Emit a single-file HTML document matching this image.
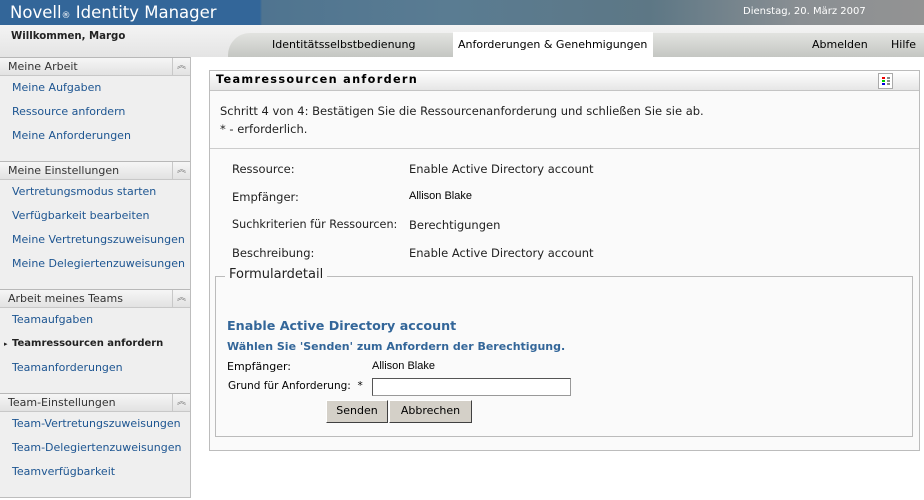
<!DOCTYPE html>
<html><head><meta charset="utf-8"><style>
*{margin:0;padding:0;box-sizing:border-box}
body{width:924px;height:500px;position:relative;overflow:hidden;background:#fff;font-family:"DejaVu Sans","Liberation Sans",sans-serif;font-size:12px;color:#000}
.a{position:absolute;white-space:nowrap}
#hdr{left:0;top:0;width:924px;height:25px;background:linear-gradient(90deg,#336699 0,#336699 260px,#4f7490 262px,#5a7c92 450px,#5d7785 650px,#8a8f93 800px,#939393 924px)}
#nav{left:0;top:25px;width:924px;height:32px;background:linear-gradient(#f4f4f4,#e4e4e4)}
#tabs{left:228px;top:33px;width:696px;height:24px;background:linear-gradient(#e2e3e0,#c4c6c2);border-radius:22px 0 0 0}
#act{left:453px;top:32px;width:200px;height:25px;background:#fff}
#side{left:0;top:57px;width:191px;height:441px;background:#efefef;border-right:1px solid #bdbdbd;border-bottom:1px solid #bdbdbd}
.sh{position:absolute;left:0;width:190px;height:19px;border-top:1px solid #b8b8b8;border-bottom:1px solid #c8c8c8;background:linear-gradient(#f6f6f6,#e2e2e2);color:#333;font-size:11px;padding:2px 0 0 8px}
.sh b{position:absolute;right:0;top:0;width:18px;height:17px;border-left:1px solid #c8c8c8;font-weight:normal;color:#777;text-align:center;font-size:9px;line-height:17px}
.si{position:absolute;left:12px;color:#1d5591;font-size:11px}
.l{color:#222;font-size:11.5px}
</style></head><body>
<div class="a" id="hdr"></div>
<div class="a" style="left:10px;top:3px;color:#fff;font-size:16.5px">Novell<span style="font-size:9px">®</span> Identity Manager</div>
<div class="a" style="left:743px;top:6px;color:#fff;font-size:10px">Dienstag, 20. März 2007</div>
<div class="a" id="nav"></div>
<div class="a" id="tabs"></div>
<div class="a" id="act"></div>
<div class="a" style="left:11px;top:31px;font-weight:bold;font-size:10.2px;color:#222">Willkommen, Margo</div>
<div class="a" style="left:272px;top:38px;font-size:11px">Identitätsselbstbedienung</div>
<div class="a" style="left:458px;top:38px;font-size:11px">Anforderungen &amp; Genehmigungen</div>
<div class="a" style="left:812px;top:38px;font-size:11px">Abmelden</div>
<div class="a" style="left:891px;top:38px;font-size:11px">Hilfe</div>
<div class="a" id="side">
<div class="sh" style="top:0">Meine Arbeit<b>︽</b></div>
<div class="si" style="top:24px">Meine Aufgaben</div>
<div class="si" style="top:48px">Ressource anfordern</div>
<div class="si" style="top:72px">Meine Anforderungen</div>
<div class="sh" style="top:104px">Meine Einstellungen<b>︽</b></div>
<div class="si" style="top:128px">Vertretungsmodus starten</div>
<div class="si" style="top:152px">Verfügbarkeit bearbeiten</div>
<div class="si" style="top:176px">Meine Vertretungszuweisungen</div>
<div class="si" style="top:200px">Meine Delegiertenzuweisungen</div>
<div class="sh" style="top:232px">Arbeit meines Teams<b>︽</b></div>
<div class="si" style="top:256px">Teamaufgaben</div>
<div class="si" style="top:281px;color:#222;font-weight:bold;font-size:10px"><span style="position:absolute;left:-8px;font-size:7px;top:2px">▸</span>Teamressourcen anfordern</div>
<div class="si" style="top:304px">Teamanforderungen</div>
<div class="sh" style="top:336px">Team-Einstellungen<b>︽</b></div>
<div class="si" style="top:360px">Team-Vertretungszuweisungen</div>
<div class="si" style="top:384px">Team-Delegiertenzuweisungen</div>
<div class="si" style="top:408px">Teamverfügbarkeit</div>
</div>
<div class="a" style="left:209px;top:70px;width:711px;height:381px;border:1px solid #bcbcbc;background:#fafafa"></div>
<div class="a" style="left:210px;top:71px;width:709px;height:20px;background:linear-gradient(#fff,#e6e6e6);border-bottom:1px solid #c4c4c4"></div>
<div class="a" style="left:216px;top:73px;font-weight:bold;letter-spacing:1.3px;font-size:11.3px">Teamressourcen anfordern</div>
<div class="a" style="left:878px;top:73px;width:15px;height:16px;border:1px solid #aaa;background:#fff">
<div style="position:absolute;left:3px;top:3px;width:3px;height:2px;background:#e00"></div><div style="position:absolute;left:3px;top:6px;width:3px;height:2px;background:#0c0"></div><div style="position:absolute;left:3px;top:9px;width:3px;height:2px;background:#00d"></div>
<div style="position:absolute;left:8px;top:3px;width:3px;height:8px;background:repeating-linear-gradient(#888 0 2px,#fff 2px 3px)"></div></div>
<div class="a l" style="left:220px;top:104px">Schritt 4 von 4: Bestätigen Sie die Ressourcenanforderung und schließen Sie sie ab.</div>
<div class="a l" style="left:220px;top:122px">* - erforderlich.</div>
<div class="a" style="left:210px;top:148px;width:709px;height:1px;background:#ccc"></div>
<div class="a l" style="left:232px;top:162px">Ressource:</div><div class="a l" style="left:409px;top:162px">Enable Active Directory account</div>
<div class="a l" style="left:232px;top:190px">Empfänger:</div><div class="a" style="left:409px;top:190px;font-family:'Liberation Sans',sans-serif;font-size:11px">Allison Blake</div>
<div class="a l" style="left:232px;top:218px;font-size:11.2px">Suchkriterien für Ressourcen:</div><div class="a l" style="left:409px;top:218px">Berechtigungen</div>
<div class="a l" style="left:232px;top:246px">Beschreibung:</div><div class="a l" style="left:409px;top:246px">Enable Active Directory account</div>
<div class="a" style="left:215px;top:276px;width:698px;height:161px;border:1px solid #bbb"></div>
<div class="a" style="left:225px;top:267px;background:#fafafa;padding:0 4px;font-size:13px;color:#222">Formulardetail</div>
<div class="a" style="left:227px;top:318px;font-weight:bold;font-size:12.7px;color:#336699">Enable Active Directory account</div>
<div class="a" style="left:227px;top:340px;font-weight:bold;font-size:11px;color:#336699">Wählen Sie 'Senden' zum Anfordern der Berechtigung.</div>
<div class="a" style="left:227px;top:360px;font-size:11px">Empfänger:</div>
<div class="a" style="left:372px;top:360px;font-family:'Liberation Sans',sans-serif;font-size:11px">Allison Blake</div>
<div class="a" style="left:228px;top:380px;font-size:10.5px">Grund für Anforderung:&nbsp; *</div>
<div class="a" style="left:372px;top:378px;width:199px;height:18px;border:1px solid #999;border-top-color:#555;border-left-color:#555;background:#fff"></div>
<div class="a" style="left:326px;top:400px;width:62px;height:23px;background:#d4d0c8;border:1px solid;border-color:#fff #404040 #404040 #fff;text-align:center;line-height:20px;font-size:11px">Senden</div>
<div class="a" style="left:389px;top:400px;width:83px;height:23px;background:#d4d0c8;border:1px solid;border-color:#fff #404040 #404040 #fff;text-align:center;line-height:20px;font-size:11px">Abbrechen</div>
</body></html>
